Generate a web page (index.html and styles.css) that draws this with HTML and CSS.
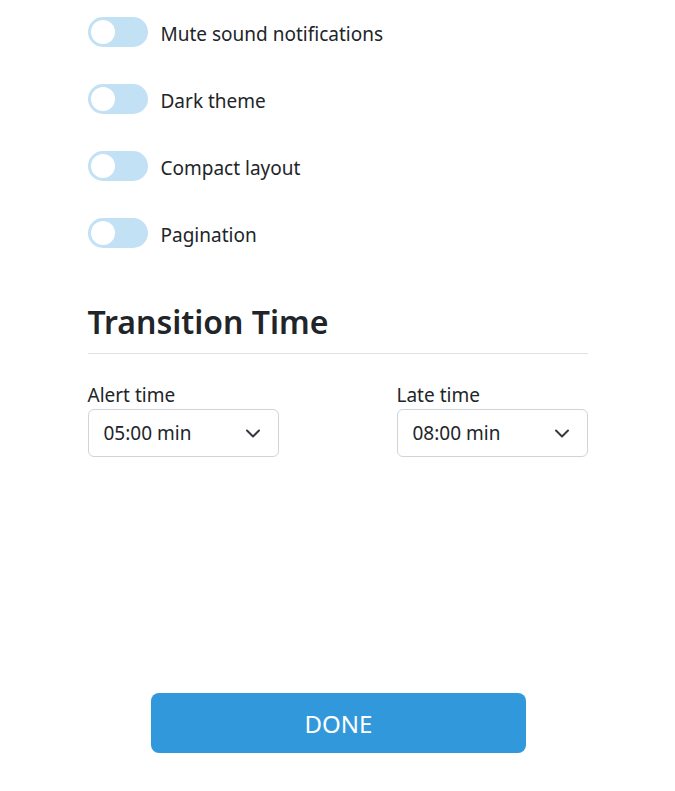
FILE: index.html
```html
<!DOCTYPE html>
<html lang="en">
<head>
<meta charset="utf-8">
<title>Settings</title>
<link rel="stylesheet" href="styles.css">
</head>
<body>
<div class="page">
  <div class="settings">
    <div class="toggles">
      <label class="toggle-row"><span class="switch"><span class="knob"></span></span><span class="toggle-label">Mute sound notifications</span></label>
      <label class="toggle-row"><span class="switch"><span class="knob"></span></span><span class="toggle-label">Dark theme</span></label>
      <label class="toggle-row"><span class="switch"><span class="knob"></span></span><span class="toggle-label">Compact layout</span></label>
      <label class="toggle-row"><span class="switch"><span class="knob"></span></span><span class="toggle-label">Pagination</span></label>
    </div>

    <h2 class="section-title">Transition Time</h2>

    <div class="time-fields">
      <div class="field">
        <div class="field-label">Alert time</div>
        <div class="select">
          <span>05:00 min</span>
          <svg class="chevron" width="16" height="12" viewBox="0 0 16 12"><path d="M2 3.5 8 9.5 14 3.5" fill="none" stroke="#343a40" stroke-width="2" stroke-linecap="round" stroke-linejoin="round"/></svg>
        </div>
      </div>
      <div class="field">
        <div class="field-label">Late time</div>
        <div class="select">
          <span>08:00 min</span>
          <svg class="chevron" width="16" height="12" viewBox="0 0 16 12"><path d="M2 3.5 8 9.5 14 3.5" fill="none" stroke="#343a40" stroke-width="2" stroke-linecap="round" stroke-linejoin="round"/></svg>
        </div>
      </div>
    </div>
  </div>

  <div class="actions">
    <button class="done-btn">DONE</button>
  </div>
</div>
</body>
</html>
```
FILE: styles.css
```css
* { box-sizing: border-box; }
html, body { margin: 0; padding: 0; background: #fff; }
body {
  font-family: "Noto Sans", "Open Sans", sans-serif;
  color: #212529;
  width: 675px;
  height: 791px;
}
.page {
  display: flex;
  flex-direction: column;
  align-items: center;
  height: 791px;
}
.settings {
  width: 500px;
  padding-top: 17px;
}
.toggles {
  display: flex;
  flex-direction: column;
  gap: 37px;
}
.toggle-row {
  display: flex;
  align-items: center;
  gap: 13px;
  height: 30px;
}
.switch {
  width: 60px;
  height: 30px;
  border-radius: 15px;
  background: #c2e1f4;
  display: flex;
  align-items: center;
  padding-left: 3px;
  flex-shrink: 0;
}
.knob {
  width: 24px;
  height: 24px;
  border-radius: 50%;
  background: #fff;
}
.toggle-label {
  font-size: 19px;
  line-height: 26px;
  padding-top: 3px;
  color: #212529;
}
.section-title {
  margin: 54px 0 0;
  font-size: 32px;
  font-weight: 600;
  line-height: 40px;
  padding-bottom: 11px;
  border-bottom: 1px solid #dee2e6;
  color: #212529;
}
.time-fields {
  display: flex;
  justify-content: space-between;
  margin-top: 29px;
}
.field { width: 191px; }
.field-label {
  font-size: 19px;
  line-height: 24px;
  margin-bottom: 2px;
}
.select {
  height: 48px;
  border: 1px solid #ced4da;
  border-radius: 6px;
  display: flex;
  align-items: center;
  justify-content: space-between;
  padding: 0 17px 0 15px;
  font-size: 19px;
}
.chevron { display: block; }
.actions {
  margin-top: auto;
  margin-left: 2px;
  padding-bottom: 38px;
}
.done-btn {
  width: 375px;
  height: 60px;
  border: none;
  border-radius: 8px;
  background: #3199db;
  color: #fff;
  font-family: "Noto Sans", "Open Sans", sans-serif;
  font-size: 24px;
}
```
